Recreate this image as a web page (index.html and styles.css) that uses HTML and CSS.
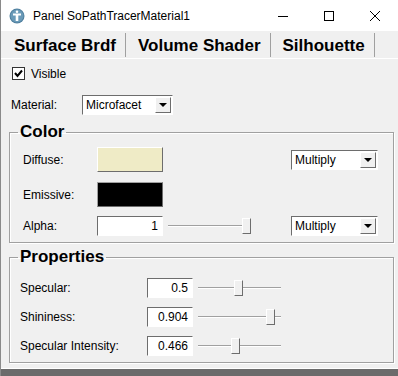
FILE: index.html
```html
<!DOCTYPE html>
<html lang="en">
<head>
    <meta charset="UTF-8">
    <title>Panel SoPathTracerMaterial1</title>
    <link rel="stylesheet" href="styles.css">
</head>
<body>
<div class="window">
    <div class="titlebar">
        <svg class="app-icon" width="16" height="16" viewBox="0 0 16 16">
            <circle cx="8" cy="8" r="7.5" fill="#4f7f9e"/>
            <circle cx="8" cy="8" r="6.5" fill="#6a9ab8"/>
            <path d="M4 5.5 L12 5.5 L12 7.5 L9.3 7.5 L9.3 13 L6.7 13 L6.7 7.5 L4 7.5 Z" fill="#fff"/>
            <circle cx="8" cy="3.8" r="1.3" fill="#fff"/>
        </svg>
        <span class="title">Panel SoPathTracerMaterial1</span>
        <div class="controls">
            <span class="ctl"><svg width="10" height="10" viewBox="0 0 10 10"><path d="M0 5.5 H10" stroke="#000" stroke-width="1"/></svg></span>
            <span class="ctl"><svg width="10" height="10" viewBox="0 0 10 10"><rect x="0.5" y="0.5" width="9" height="9" fill="none" stroke="#000" stroke-width="1"/></svg></span>
            <span class="ctl"><svg width="10" height="10" viewBox="0 0 10 10"><path d="M0 0 L10 10 M10 0 L0 10" stroke="#000" stroke-width="1"/></svg></span>
        </div>
    </div>

    <div class="tabs">
        <div class="tab first">Surface Brdf</div>
        <div class="tab">Volume Shader</div>
        <div class="tab">Silhouette</div>
    </div>

    <div class="page">
        <div class="check-row">
            <span class="checkbox">
                <svg width="11" height="11" viewBox="0 0 11 11"><path d="M2 5 L4.5 8 L9 2.5" fill="none" stroke="#000" stroke-width="2"/></svg>
            </span>
            <span>Visible</span>
        </div>

        <div class="material-row">
            <span class="material-label">Material:</span>
            <div class="combo combo-material">Microfacet<span class="arrow"></span></div>
        </div>

        <fieldset class="group group-color">
            <legend>Color</legend>
            <div class="crow">
                <span class="clabel">Diffuse:</span>
                <div class="swatch diffuse"></div>
                <div class="fill"></div>
                <div class="combo combo-mode">Multiply<span class="arrow"></span></div>
            </div>
            <div class="crow">
                <span class="clabel">Emissive:</span>
                <div class="swatch emissive"></div>
            </div>
            <div class="crow alpha-row">
                <span class="clabel">Alpha:</span>
                <div class="field field-alpha">1</div>
                <div class="slider slider-alpha"><span class="thumb" style="left: 74px"></span></div>
                <div class="fill"></div>
                <div class="combo combo-mode">Multiply<span class="arrow"></span></div>
            </div>
        </fieldset>

        <fieldset class="group group-props">
            <legend>Properties</legend>
            <div class="prow">
                <span class="plabel">Specular:</span>
                <div class="field">0.5</div>
                <div class="slider"><span class="thumb" style="left: 36px"></span></div>
            </div>
            <div class="prow">
                <span class="plabel">Shininess:</span>
                <div class="field">0.904</div>
                <div class="slider"><span class="thumb" style="left: 68px"></span></div>
            </div>
            <div class="prow">
                <span class="plabel">Specular Intensity:</span>
                <div class="field">0.466</div>
                <div class="slider"><span class="thumb" style="left: 33px"></span></div>
            </div>
        </fieldset>
    </div>
    <div class="frame-bottom"></div>
</div>
</body>
</html>
```

FILE: styles.css
```css
body {
    margin: 0;
    font-family: 'Liberation Sans', Arial, sans-serif;
    font-size: 12px;
    color: #000;
    background: #f0f0f0;
}
.window {
    width: 398px;
    height: 376px;
    border-left: 1px solid #8a8a8a;
    box-sizing: border-box;
    display: flex;
    flex-direction: column;
    overflow: hidden;
}

/* title bar */
.titlebar {
    height: 31px;
    background: #fff;
    display: flex;
    align-items: center;
    flex-shrink: 0;
}
.app-icon {
    margin-left: 8px;
    margin-right: 8px;
}
.title {
    font-size: 12px;
    color: #000;
}
.controls {
    margin-left: auto;
    display: flex;
}
.ctl {
    width: 46px;
    height: 30px;
    display: flex;
    align-items: center;
    justify-content: center;
}

/* tabs */
.tabs {
    height: 27px;
    display: flex;
    align-items: stretch;
    border-bottom: 1px solid #fff;
    flex-shrink: 0;
}
.tab {
    font-size: 17px;
    font-weight: bold;
    padding: 2px 9px 0 12px;
    display: flex;
    align-items: center;
    border-right: 1px solid #a0a0a0;
    margin: 2px 0 1px;
}
.tab.first {
    padding-left: 13px;
}

/* page */
.page {
    flex: 1;
    padding: 8px 0 0 7px;
}
.check-row {
    display: flex;
    align-items: center;
    height: 13px;
    margin-left: 4px;
}
.checkbox {
    width: 11px;
    height: 11px;
    border: 1px solid #333;
    background: #fff;
    margin-right: 6px;
    display: flex;
}
.material-row {
    display: flex;
    align-items: center;
    margin-top: 15px;
    height: 20px;
}
.material-label {
    width: 74px;
    padding-left: 3px;
    box-sizing: border-box;
}

/* combo box */
.combo {
    height: 20px;
    box-sizing: border-box;
    background: #fff;
    border: 1px solid;
    border-color: #6d6d6d #fff #fff #6d6d6d;
    display: flex;
    align-items: center;
    padding-left: 3px;
    position: relative;
}
.combo-material {
    width: 91px;
}
.combo-mode {
    width: 87px;
    margin-right: 15px;
}
.arrow {
    position: absolute;
    right: 1px;
    top: 1px;
    width: 16px;
    height: 16px;
    box-sizing: border-box;
    background: #f0f0f0;
    border: 1px solid;
    border-color: #fff #6d6d6d #6d6d6d #fff;
}
.arrow::after {
    content: '';
    position: absolute;
    left: 3px;
    top: 5px;
    border-left: 4px solid transparent;
    border-right: 4px solid transparent;
    border-top: 4px solid #000;
}

/* group boxes */
.group {
    margin: 7px 0 0 1px;
    width: 385px;
    box-sizing: border-box;
    border: 1px solid #a0a0a0;
    box-shadow: 1px 1px 0 #fff, inset 1px 1px 0 #fff;
    padding: 5px 0 6px 13px;
}
.group legend {
    font-size: 17px;
    font-weight: bold;
    line-height: 20px;
    padding: 0 2px;
    margin-left: -5px;
}
.group-props {
    margin-top: 4px;
    padding: 11px 0 6px 10px;
}
.group-props legend {
    margin-left: -2px;
}

.crow {
    display: flex;
    align-items: center;
    height: 25px;
    margin-bottom: 10px;
}
.crow.alpha-row {
    height: 20px;
    margin-top: -1px;
    margin-bottom: 0;
}
.clabel {
    width: 74px;
}
.fill {
    flex: 1;
}
.swatch {
    width: 66px;
    height: 25px;
    box-sizing: border-box;
    border: 1px solid;
    border-color: #fff #6d6d6d #6d6d6d #fff;
}
.diffuse {
    background: #efebc6;
}
.emissive {
    background: #000;
    border-color: #a0a0a0 #6d6d6d #6d6d6d #a0a0a0;
}

.field {
    width: 46px;
    height: 20px;
    box-sizing: border-box;
    background: #fff;
    border: 1px solid;
    border-color: #6d6d6d #fff #fff #6d6d6d;
    text-align: right;
    padding-right: 4px;
    line-height: 18px;
    font-size: 12px;
}
.field-alpha {
    width: 66px;
}

/* sliders */
.slider {
    position: relative;
    width: 83px;
    height: 16px;
    margin-left: 5px;
}
.slider::before {
    content: '';
    position: absolute;
    left: 0;
    right: 0;
    top: 7px;
    border-top: 1px solid #a0a0a0;
    border-bottom: 1px solid #fff;
}
.thumb {
    position: absolute;
    top: 0;
    width: 9px;
    height: 16px;
    box-sizing: border-box;
    background: #f0f0f0;
    border: 1px solid;
    border-color: #fff #6d6d6d #6d6d6d #fff;
}

.prow {
    display: flex;
    align-items: center;
    height: 20px;
    margin-bottom: 9px;
}
.prow:last-child {
    margin-bottom: 0;
}
.plabel {
    width: 127px;
}

.frame-bottom {
    height: 7px;
    background: #6b6b6b;
    border-top: 1px solid #fff;
    flex-shrink: 0;
}
```
